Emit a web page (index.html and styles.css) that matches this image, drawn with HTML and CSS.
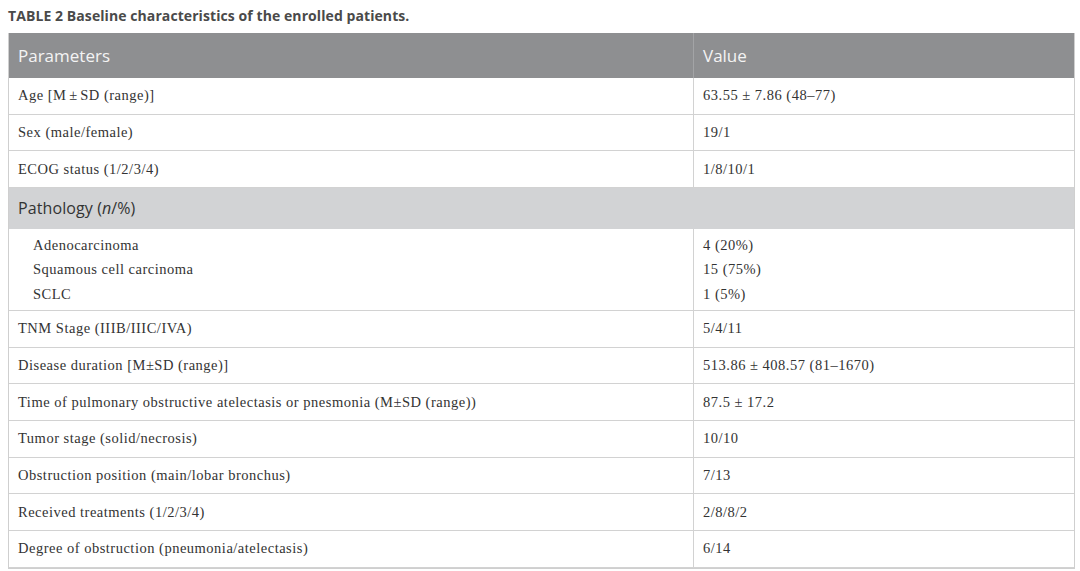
FILE: index.html
```html
<!DOCTYPE html>
<html>
<head>
<meta charset="utf-8">
<link rel="stylesheet" href="styles.css">
</head>
<body>
<div class="caption">TABLE 2 Baseline characteristics of the enrolled patients.</div>
<div class="table">
  <div class="row head"><div class="cell">Parameters</div><div class="cell val">Value</div></div>
  <div class="row"><div class="cell">Age [M<span class="pm"> ± </span>SD (range)]</div><div class="cell val">63.55 ± 7.86 (48–77)</div></div>
  <div class="row"><div class="cell">Sex (male/female)</div><div class="cell val">19/1</div></div>
  <div class="row"><div class="cell">ECOG status (1/2/3/4)</div><div class="cell val">1/8/10/1</div></div>
  <div class="row group"><div class="cell">Pathology (<i>n</i>/%)</div></div>
  <div class="row sub">
    <div class="cell"><span>Adenocarcinoma</span><span>Squamous cell carcinoma</span><span>SCLC</span></div>
    <div class="cell val"><span>4 (20%)</span><span>15 (75%)</span><span>1 (5%)</span></div>
  </div>
  <div class="row"><div class="cell">TNM Stage (IIIB/IIIC/IVA)</div><div class="cell val">5/4/11</div></div>
  <div class="row"><div class="cell">Disease duration [M±SD (range)]</div><div class="cell val">513.86 ± 408.57 (81–1670)</div></div>
  <div class="row"><div class="cell">Time of pulmonary obstructive atelectasis or pnesmonia (M±SD (range))</div><div class="cell val">87.5 ± 17.2</div></div>
  <div class="row"><div class="cell">Tumor stage (solid/necrosis)</div><div class="cell val">10/10</div></div>
  <div class="row"><div class="cell">Obstruction position (main/lobar bronchus)</div><div class="cell val">7/13</div></div>
  <div class="row"><div class="cell">Received treatments (1/2/3/4)</div><div class="cell val">2/8/8/2</div></div>
  <div class="row"><div class="cell">Degree of obstruction (pneumonia/atelectasis)</div><div class="cell val">6/14</div></div>
</div>
</body>
</html>
```
FILE: styles.css
```css
* { box-sizing: border-box; }
html, body { margin: 0; padding: 0; background: #fff; }
body { padding: 6px 5px 0 8px; }
.caption {
  font-family: "Open Sans", "Liberation Sans", sans-serif;
  font-weight: 700;
  font-size: 14px;
  line-height: 19px;
  color: #4a4a4a;
  height: 27px;
  letter-spacing: 0.08px;
}
.table {
  width: 1067px;
  border: 1px solid #cfcfcf;
  border-top: none;
  font-family: "Liberation Serif", serif;
  font-size: 14.5px;
  letter-spacing: 0.5px;
  color: #333;
}
.pm { word-spacing: -1.5px; }
.row {
  display: grid;
  grid-template-columns: 684px 1fr;
  height: 36.67px;
  border-bottom: 1px solid #d2d2d2;
}
.cell {
  display: flex;
  align-items: center;
  padding-left: 9px;
  white-space: pre;
}
.val { border-left: 1px solid #d2d2d2; padding-left: 9px; }
.head {
  height: 45px;
  background: #8e8f91;
  border-bottom: none;
  font-family: "Open Sans", "Liberation Sans", sans-serif;
  font-size: 17px;
  letter-spacing: 0;
  color: #f4f4f4;
}
.head .val { border-left: 1px solid #a3a4a6; }
.group {
  display: flex;
  height: 41px;
  background: #d2d3d5;
  border-bottom: none;
  font-family: "Open Sans", "Liberation Sans", sans-serif;
  font-size: 16px;
  letter-spacing: 0.1px;
  color: #333;
}
.sub { height: 82px; }
.sub .cell {
  flex-direction: column;
  align-items: flex-start;
  justify-content: center;
  line-height: 24.5px;
}
.sub .cell:first-child { padding-left: 24px; }
```
